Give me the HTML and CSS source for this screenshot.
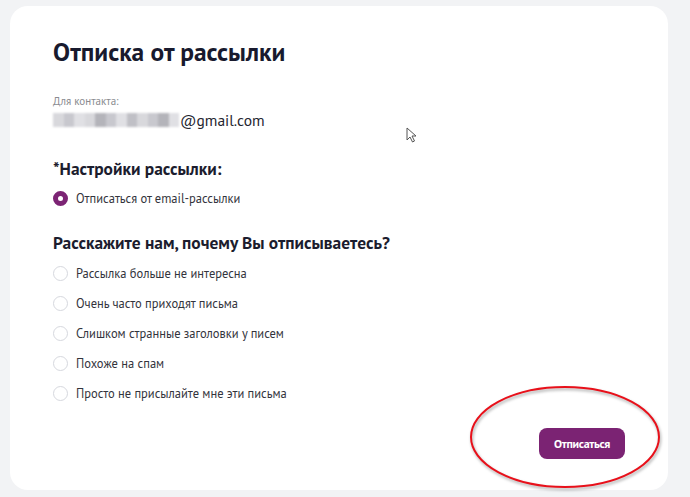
FILE: index.html
```html
<!DOCTYPE html>
<html lang="ru">
<head>
<meta charset="utf-8">
<link rel="stylesheet" href="styles.css">
</head>
<body>
<div class="page">
  <div class="card">
    <h1 class="title">Отписка от рассылки</h1>
    <div class="contact-label">Для контакта:</div>
    <div class="email">
      <span class="blur">
        <i class="b1"></i><i class="b2"></i><i class="b3"></i><i class="b1"></i><i class="b4"></i><i class="b2"></i><i class="b3"></i><i class="b5"></i><i class="b1"></i><i class="b2"></i><i class="b4"></i><i class="b3"></i>
      </span><span>@gmail.com</span>
    </div>
    <h2 class="section">*Настройки рассылки:</h2>
    <div class="option"><span class="radio checked"></span><span>Отписаться от email-рассылки</span></div>
    <h2 class="section second">Расскажите нам, почему Вы отписываетесь?</h2>
    <div class="options">
      <div class="option"><span class="radio"></span><span>Рассылка больше не интересна</span></div>
      <div class="option"><span class="radio"></span><span>Очень часто приходят письма</span></div>
      <div class="option"><span class="radio"></span><span>Слишком странные заголовки у писем</span></div>
      <div class="option"><span class="radio"></span><span>Похоже на спам</span></div>
      <div class="option"><span class="radio"></span><span>Просто не присылайте мне эти письма</span></div>
    </div>
    <div class="actions">
      <button class="btn">Отписаться</button>
    </div>
  </div>
  <svg class="cursor" width="12" height="16" viewBox="0 0 12 16"><path d="M1 1 L1 13 L4 10 L6.5 15 L8.5 14 L6 9 L10 9 Z" fill="#fff" stroke="#555" stroke-width="1"/></svg>
  <svg class="ellipse" width="200" height="112" viewBox="0 0 200 112"><ellipse cx="99" cy="55" rx="94" ry="50" fill="none" stroke="#e8101a" stroke-width="2"/></svg>
</div>
</body>
</html>
```
FILE: styles.css
```css
* { box-sizing: border-box; }
html, body { margin: 0; padding: 0; }
body {
  width: 690px;
  height: 497px;
  background: #f2f3f5;
  font-family: "PT Sans", Roboto, "Noto Sans", sans-serif;
  color: #1c1d2b;
  overflow: hidden;
}
.page {
  position: relative;
  padding: 6px 22px 0 10px;
}
.card {
  background: #fff;
  border-radius: 18px;
  height: 484px;
  padding: 31px 43px 0 43px;
}
.title {
  margin: 0;
  font-size: 25.4px;
  font-weight: 700;
  line-height: 30px;
  color: #181a2e;
}
.contact-label {
  margin-top: 28px;
  font-size: 11px;
  line-height: 13px;
  color: #8a8b90;
}
.email {
  display: flex;
  align-items: center;
  margin-top: 2px;
  font-size: 15.5px;
  line-height: 20px;
  color: #24252f;
}
.blur {
  display: flex;
  width: 126px;
  height: 14px;
  margin-right: 1px;
  filter: blur(1.2px);
}
.blur i { flex: 1; display: block; }
.b1 { background: #d8d8dc; }
.b2 { background: #c8c8ce; }
.b3 { background: #e0e0e4; }
.b4 { background: #b4b4ba; }
.b5 { background: #c0c0c6; }
.section {
  margin: 28px 0 3px;
  font-size: 17.4px;
  font-weight: 700;
  line-height: 22px;
  color: #1c1d2e;
}
.section.second { margin: 19px 0 4px; }
.option {
  display: flex;
  align-items: center;
  height: 30px;
  font-size: 12.5px;
  color: #33343c;
}
.radio {
  width: 15px;
  height: 15px;
  border-radius: 50%;
  border: 1px solid #d6d8de;
  margin-right: 8px;
  flex: none;
}
.radio.checked {
  border: 5px solid #7c2474;
  background: #fff;
}
.actions {
  display: flex;
  justify-content: flex-end;
  margin-top: 20px;
}
.btn {
  width: 86px;
  height: 31px;
  border: none;
  border-radius: 8px;
  background: #7b2373;
  color: #fff;
  font-family: inherit;
  font-size: 12px;
  font-weight: 700;
  letter-spacing: -0.3px;
}
.cursor { position: absolute; left: 406px; top: 127px; }
.ellipse {
  position: absolute;
  left: 466px;
  top: 382px;
  filter: drop-shadow(1px 2px 1.5px rgba(0,0,0,0.35));
}
```
